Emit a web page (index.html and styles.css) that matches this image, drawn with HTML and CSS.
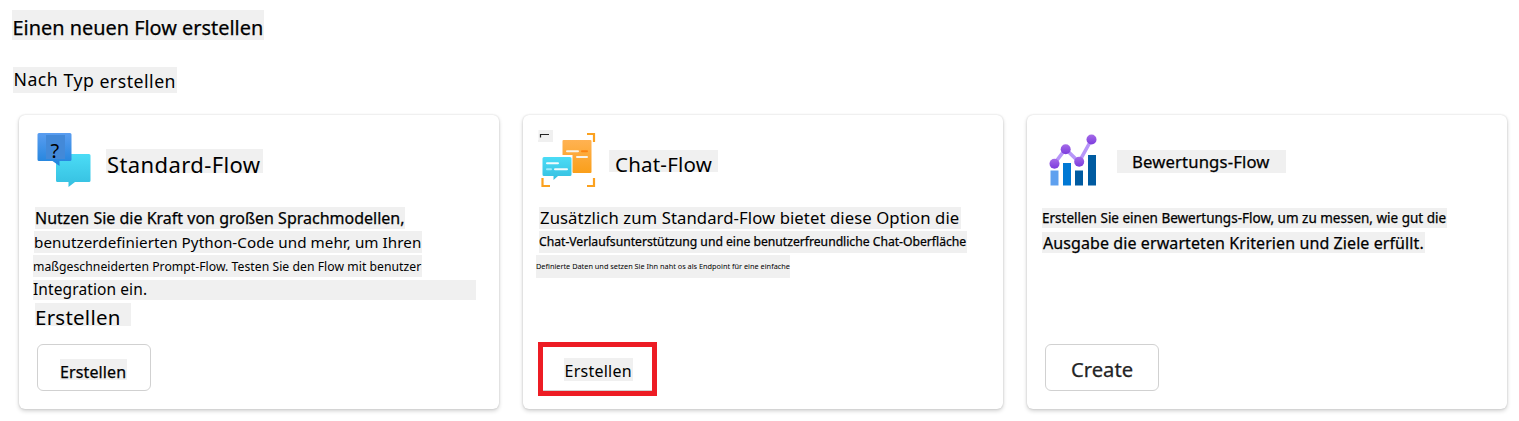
FILE: index.html
```
<!DOCTYPE html>
<html lang="de">
<head>
<meta charset="utf-8">
<title>Einen neuen Flow erstellen</title>
<link rel="stylesheet" href="styles.css">
</head>
<body>
<main class="page">
  <h1 class="mark strong page-title">Einen neuen Flow erstellen</h1>
  <h2 class="mark page-subtitle"><span class="raised">Nach</span> <span class="half-raised">Typ</span> erstellen</h2>
  <div class="cards">
    <section class="card">
      <header class="card-head">
        <svg class="icon" viewBox="0 0 54 54">
          <defs>
            <linearGradient id="blue" x2="0" y2="1"><stop stop-color="#5a9df0"/><stop offset="1" stop-color="#1f83dc"/></linearGradient>
            <linearGradient id="cyan" x2="0" y2="1"><stop stop-color="#4bdcf6"/><stop offset="1" stop-color="#35bfe0"/></linearGradient>
          </defs>
          <path fill="url(#cyan)" d="M20.500 21H52a1.500 1.500 0 0 1 1.500 1.500V47.500A1.500 1.500 0 0 1 52 49H38L31.500 54V49H20.500A1.500 1.500 0 0 1 19 47.500V22.500A1.500 1.500 0 0 1 20.500 21Z"/>
          <path fill="url(#blue)" d="M2 0H33A1.500 1.500 0 0 1 34.500 1.500V26.500A1.500 1.500 0 0 1 33 28H22.500V33L15.500 28H2A1.500 1.500 0 0 1 .5 26.500V1.500A1.500 1.500 0 0 1 2 0Z"/>
          <path fill="#4389d8" d="M9 2h19v24H9z"/>
          <text class="icon-mark" x="13.500" y="24.500">?</text>
        </svg>
        <h3 class="mark name-standard">Standard-Flow</h3>
      </header>
      <p class="mark strong std-1">Nutzen Sie die Kraft von großen Sprachmodellen,</p>
      <p class="mark std-2">benutzerdefinierten Python-Code und mehr, um Ihren</p>
      <p class="mark std-3">maßgeschneiderten Prompt-Flow. Testen Sie den Flow mit benutzer</p>
      <p class="mark std-4">Integration ein.</p>
      <p class="mark std-5">Erstellen</p>
      <button class="button"><span class="mark strong label-standard">Erstellen</span></button>
    </section>

    <section class="card">
      <header class="card-head">
        <svg class="icon" viewBox="0 0 54 54">
          <defs>
            <linearGradient id="orange" x2="0" y2="1"><stop stop-color="#ffb252"/><stop offset="1" stop-color="#fa9f1a"/></linearGradient>
          </defs>
          <path fill="#f0f0f0" d="M-2.500 -3H12V9H-3V7h.5Z"/>
          <path fill="none" stroke="#222" stroke-width="1.200" d="M-.5 4.500V1.500H8"/>
          <path fill="none" stroke="#fba11f" stroke-width="2.200" d="M46 1h7v8M46 53h7v-8M9 53H1.500v-8"/>
          <path fill="url(#orange)" d="M22.500 7H49.500a1 1 0 0 1 1 1V39a1 1 0 0 1-1 1H32.500a1 1 0 0 1-1-1V22H21.500V8a1 1 0 0 1 1-1Z"/>
          <path stroke="#f7f3e9" stroke-width="2" stroke-linecap="round" d="M26 18.200h11M36 24h10"/>
          <path stroke="#fb8410" stroke-width="2" stroke-linecap="round" d="M41 18.200h5"/>
          <path fill="url(#cyan)" d="M3 24H29a1.500 1.500 0 0 1 1.500 1.500V41.500A1.500 1.500 0 0 1 29 43H17L12.500 47V43H3a1.500 1.500 0 0 1-1.500-1.500V25.500A1.500 1.500 0 0 1 3 24Z"/>
          <path stroke="#f2fbfd" stroke-width="2" stroke-linecap="round" d="M6 30.200H17M14 36.200H26"/>
          <path stroke="#9cecfb" stroke-width="2" stroke-linecap="round" d="M6 36.200h4"/>
        </svg>
        <h3 class="mark name-chat">Chat-Flow</h3>
      </header>
      <p class="mark chat-1">Zusätzlich zum Standard-Flow bietet diese Option die</p>
      <p class="mark strong chat-2">Chat-Verlaufsunterstützung und eine benutzerfreundliche Chat-Oberfläche</p>
      <p class="mark chat-3">Definierte Daten und setzen Sie Ihn naht os als Endpoint für eine einfache</p>
      <button class="button highlighted"><span class="mark label-chat">Erstellen</span></button>
    </section>

    <section class="card">
      <header class="card-head">
        <svg class="icon" viewBox="0 0 54 54">
          <defs>
            <linearGradient id="violet" x2="0" y2="1"><stop stop-color="#a56be8"/><stop offset="1" stop-color="#7c3bdd"/></linearGradient>
          </defs>
          <path fill="#5ea0ef" d="M5.500 37.500h8V52.500h-8z"/>
          <path fill="#0078d4" d="M18 30h8V52.500h-8z"/>
          <path fill="#005ba1" d="M30 37.500h8V52.500h-8zM43 22h8V52.500H43z"/>
          <path fill="none" stroke="#b796f9" stroke-width="3.600" d="M9.500 30.500 20.500 16 34 29 46.500 6.500"/>
          <g fill="url(#violet)"><circle cx="9.500" cy="30.700" r="5"/><circle cx="20.700" cy="16.200" r="5"/><circle cx="34.200" cy="28.700" r="5"/><circle cx="46.500" cy="6.500" r="5"/></g>
        </svg>
        <h3 class="mark strong name-eval">Bewertungs-Flow</h3>
      </header>
      <p class="mark strong eval-1">Erstellen Sie einen Bewertungs-Flow, um zu messen, wie gut die</p>
      <p class="mark strong eval-2">Ausgabe die erwarteten Kriterien und Ziele erfüllt.</p>
      <button class="button"><span class="strong label-eval">Create</span></button>
    </section>
  </div>
</main>
</body>
</html>
```
FILE: styles.css
```
* { box-sizing: border-box; }

body {
  margin: 0;
  background: #fff;
  color: #000;
  font-family: "Noto Sans", "Open Sans", sans-serif;
}

h1, h2, h3, p { margin: 0; font-weight: 400; }

.page {
  display: flex;
  flex-direction: column;
  height: 421px;
  padding: 10px 12px 12px;
  overflow: hidden;
}

/* Text on a grey highlight strip */
.mark {
  display: block;
  flex: none;
  background: #f0f0f0;
  white-space: pre;
}

.strong { -webkit-text-stroke: 0.25px currentColor; }

.page-title { width: 252px; height: 30px; padding-left: 0.5px; font-size: 19.9px; line-height: 36.5px; }
.page-subtitle { width: 164px; height: 26px; margin: 27px 0 0 1px; padding-left: 0.5px; font-size: 17.7px; line-height: 28.4px; letter-spacing: 0.5px; }
.raised { display: inline-block; transform: translateY(-2px); }
.half-raised { display: inline-block; transform: translateY(-1px); }

.cards {
  display: grid;
  grid-template-columns: repeat(3, 480px);
  gap: 24px;
  height: 294px;
  margin: 22px 0 0 7px;
}

.card {
  display: flex;
  flex-direction: column;
  align-items: flex-start;
  height: 294px;
  padding: 18px;
  border-radius: 6px;
  background: #fff;
  box-shadow: 0 0 2px rgba(0, 0, 0, 0.16), 0 2px 4px rgba(0, 0, 0, 0.18);
}

.card-head { display: flex; align-items: flex-start; flex: none; height: 74px; }
.icon { width: 54px; height: 54px; overflow: visible; }
.icon-mark { font-size: 20px; }

.name-standard { width: 157px; height: 24px; margin: 16px 0 0 15px; padding-left: 1px; font-size: 22px; line-height: 31px; letter-spacing: 0.4px; }
.name-chat { width: 109px; height: 22px; margin: 17px 0 0 14px; padding-left: 6px; font-size: 20.5px; line-height: 28.5px; letter-spacing: 0.2px; }
.name-eval { width: 169px; height: 23px; margin: 17px 0 0 18px; padding-left: 15px; font-size: 16.7px; line-height: 23.5px; letter-spacing: 0.14px; }

.std-1 { width: 370px; height: 22px; margin-left: -2px; font-size: 16px; line-height: 23.6px; }
.std-2 { width: 388px; height: 22px; margin: 2px 0 0 -3px; font-size: 15.2px; line-height: 22.4px; letter-spacing: 0.06px; }
.std-3 { width: 389px; height: 22px; margin: 2px 0 0 -4px; font-size: 12.2px; line-height: 24px; letter-spacing: 0.04px; }
.std-4 { width: 443px; height: 20px; margin: 3px 0 0 -4px; font-size: 15.5px; line-height: 19.6px; letter-spacing: 0.1px; }
.std-5 { width: 96px; height: 23px; margin: 3px 0 0 -2px; font-size: 20.5px; line-height: 28px; letter-spacing: 0.24px; }

.chat-1 { width: 422px; height: 22px; margin-left: -2px; padding-left: 1px; font-size: 16.7px; line-height: 21.2px; letter-spacing: 0.08px; }
.chat-2 { width: 428px; height: 22px; margin: 2px 0 0 -2px; font-size: 12.2px; line-height: 21.5px; letter-spacing: -0.02px; }
.chat-3 { width: 254px; height: 23px; margin: 2px 0 0 -5px; font-size: 7.34px; line-height: 22px; }

.eval-1 { width: 405px; height: 20px; margin: 1px 0 0 -3px; font-size: 13.5px; line-height: 20.5px; }
.eval-2 { width: 383px; height: 21px; margin: 4px 0 0 -3px; padding-left: 1px; font-size: 16px; line-height: 22.5px; letter-spacing: 0.09px; }

.button {
  display: flex;
  justify-content: flex-start;
  align-items: flex-start;
  flex: none;
  width: 114px;
  height: 47px;
  margin-top: auto;
  padding: 14px 0 0 22px;
  border: 1px solid #d1d1d1;
  border-radius: 6px;
  background: #fff;
  color: inherit;
  font-family: inherit;
}

.button.highlighted {
  width: 119px;
  height: 54px;
  margin: auto 0 -5px -3px;
  padding: 11px 0 0 21px;
  border: 5px solid #ed1c24;
  border-radius: 0;
  box-shadow: inset 0 -1px 0 #d1d1d1;
}

.label-standard { width: 67px; height: 21px; font-size: 16px; line-height: 26px; letter-spacing: 0.12px; text-align: left; }
.label-chat { width: 69px; height: 23px; padding-left: 0.5px; font-size: 16px; line-height: 27px; letter-spacing: 0.25px; text-align: left; }
.label-eval { padding-left: 3px; color: #242424; font-size: 20.2px; line-height: 20px; }
```
